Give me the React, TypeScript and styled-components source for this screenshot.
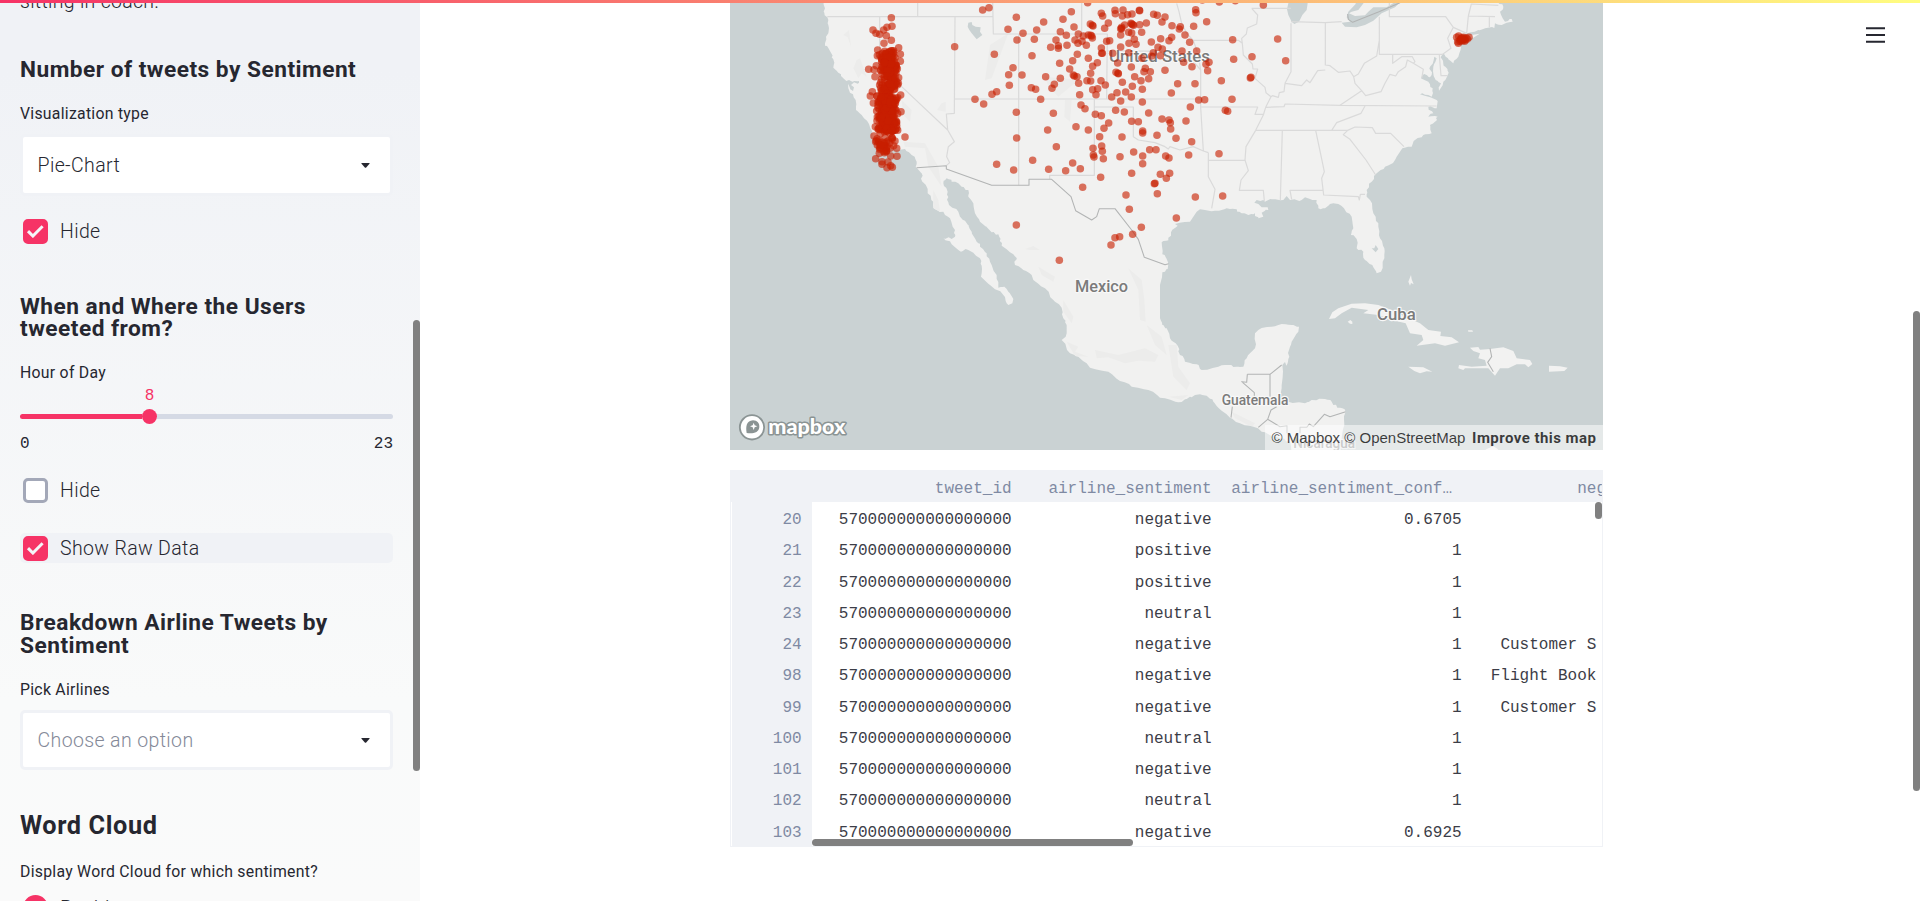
import React from "react";
import styled, { createGlobalStyle } from "styled-components";

const GlobalStyle = createGlobalStyle`
  html, body { margin: 0; padding: 0; overflow: hidden; background: #fff; }
  *, *::before, *::after { box-sizing: border-box; }
`;

const SANS = `Roboto, "Liberation Sans", sans-serif`;
const MONO = `"Liberation Mono", monospace`;
const INK = "#262730";
const PINK = "#f63366";

/* ---------- page frame ---------- */

const Page = styled.div`
  position: relative;
  display: flex;
  width: 1920px;
  height: 901px;
  overflow: hidden;
  background: #fff;
  color: ${INK};
  font-family: ${SANS};
`;

const Decoration = styled.div`
  position: absolute;
  inset: 0 0 auto 0;
  height: 3px;
  z-index: 5;
  background: linear-gradient(90deg, #f63366, #fffd80);
`;

const Thumb = styled.div<{ $top: number; $length: number }>`
  position: absolute;
  right: 0;
  top: ${(p) => p.$top}px;
  width: 7px;
  height: ${(p) => p.$length}px;
  border-radius: 4px;
  background: #808080;
`;

const MenuButton = styled.button`
  position: absolute;
  top: 27px;
  right: 35px;
  width: 19px;
  height: 17px;
  padding: 0;
  border: 0;
  background: none;
  svg { display: block; }
`;

/* ---------- sidebar ---------- */

const Sidebar = styled.aside`
  position: relative;
  flex: none;
  width: 420px;
  height: 901px;
  overflow: hidden;
  background: linear-gradient(180deg, #f0f2f6 0, #f0f2f6 70px, #f9fafa 700px, #fafafa 901px);
`;

const SidebarContent = styled.div`
  display: flex;
  flex-direction: column;
  margin-top: -12px;
  padding: 0 27px 0 20px;
`;

const Paragraph = styled.p`
  margin: 0;
  font-size: 19.5px;
  font-weight: 350;
  line-height: 27px;
  height: 28px;
  letter-spacing: 0.3px;
  white-space: nowrap;
`;

const Heading = styled.h3<{ $gap: number }>`
  margin: ${(p) => p.$gap - 1}px 0 0;
  padding-bottom: 1px;
  font-size: 22.7px;
  font-weight: 700;
  line-height: 22.4px;
  letter-spacing: 0.48px;
  white-space: nowrap;
`;

const Title = styled.h2`
  margin: 43px 0 0;
  font-size: 25.3px;
  font-weight: 700;
  line-height: 25px;
  letter-spacing: 0.6px;
`;

const Label = styled.label<{ $gap?: number }>`
  margin-top: ${(p) => p.$gap ?? 20}px;
  font-size: 15.8px;
  font-weight: 370;
  line-height: 24px;
  letter-spacing: 0.27px;
  white-space: nowrap;
`;

const Select = styled.div<{ $height: number; $muted?: boolean }>`
  display: flex;
  align-items: center;
  justify-content: space-between;
  height: ${(p) => p.$height}px;
  margin-top: 8px;
  padding: 0 20.5px 0 14.5px;
  border: 3px solid #f0f2f6;
  border-radius: 5px;
  background: #fff;
  color: ${(p) => (p.$muted ? "#848998" : INK)};
  font-size: 19.5px;
  font-weight: 350;
  letter-spacing: 0.38px;
`;

const CheckRow = styled.div<{ $gap: number; $active?: boolean }>`
  display: flex;
  align-items: center;
  height: 30px;
  margin-top: ${(p) => p.$gap}px;
  padding-left: 3px;
  gap: 12px;
  border-radius: 5px;
  background: ${(p) => (p.$active ? "#f0f2f6" : "transparent")};
  font-size: 19.5px;
  font-weight: 350;
  letter-spacing: 0.35px;
`;

const RadioLabel = styled.span`
  padding-top: 3px;
`;

const Box = styled.span<{ $checked?: boolean }>`
  display: flex;
  align-items: center;
  justify-content: center;
  width: 25px;
  height: 25px;
  border: 3px solid ${(p) => (p.$checked ? PINK : "#a3a8b8")};
  border-radius: 5px;
  background: ${(p) => (p.$checked ? PINK : "#fff")};
`;

const Radio = styled.span`
  width: 25px;
  height: 25px;
  border: 8px solid ${PINK};
  border-radius: 50%;
  background: #fff;
`;

const Slider = styled.div`
  display: flex;
  flex-direction: column;
  padding-top: 3px;
  font-family: ${MONO};
  font-size: 16px;
`;

const SliderValue = styled.div`
  padding-left: 124.7px;
  color: ${PINK};
  line-height: 16px;
`;

const Track = styled.div`
  display: flex;
  align-items: center;
  height: 15px;
  margin-top: 5px;
`;

const TrackPart = styled.div<{ $filled?: boolean }>`
  width: ${(p) => (p.$filled ? "122px" : "auto")};
  flex: ${(p) => (p.$filled ? "none" : "1")};
  height: 5px;
  border-radius: ${(p) => (p.$filled ? "3px 0 0 3px" : "0 3px 3px 0")};
  background: ${(p) => (p.$filled ? PINK : "#d5dae5")};
`;

const Knob = styled.div`
  flex: none;
  width: 15px;
  height: 15px;
  border-radius: 50%;
  background: ${PINK};
`;

const Ticks = styled.div`
  display: flex;
  justify-content: space-between;
  margin-top: 10px;
  line-height: 20px;
`;

const Caret = () => (
  <svg width="9" height="5" viewBox="0 0 9 5">
    <path d="M.3.4Q0 0 .6 0H8.4Q9 0 8.7.4L5.2 4.4Q4.5 5 3.8 4.4Z" fill={INK} />
  </svg>
);

const CheckMark = styled.svg`
  flex: none;
`;

const Check = () => (
  <CheckMark width="19" height="14" viewBox="0 0 19 14">
    <path d="M2 7.1 6.9 12 16.6 2.2" fill="none" stroke="#f4f5f8" strokeWidth="3" />
  </CheckMark>
);

/* ---------- main column ---------- */

const Main = styled.main`
  position: relative;
  flex: 1;
  display: flex;
  flex-direction: column;
  align-items: center;
  gap: 20px;
  padding-right: 7px;
`;

const MapFrame = styled.div`
  position: relative;
  width: 873px;
  height: 450px;
  overflow: hidden;
  background: #cad2d3;
  svg { display: block; }
`;

const Attribution = styled.div`
  position: absolute;
  right: 0;
  bottom: 0;
  display: flex;
  align-items: center;
  width: 338px;
  height: 25px;
  padding-left: 6.5px;
  background: rgba(255, 255, 255, 0.5);
  color: rgba(0, 0, 0, 0.75);
  font-family: "Liberation Sans", sans-serif;
  font-size: 15px;
  white-space: nowrap;
  span { margin-right: 4.2px; }
  strong { margin-left: 2.5px; font-family: ${SANS}; font-weight: 700; letter-spacing: 0.45px; }
`;

const TableFrame = styled.div`
  position: relative;
  width: 873px;
  height: 377px;
  overflow: hidden;
  border: 1px solid #f0f2f6;
  font-family: ${MONO};
  font-size: 16px;
`;

const TableRow = styled.div<{ $head?: boolean }>`
  display: flex;
  width: 1000px;
  height: ${(p) => (p.$head ? 31 : 31.25)}px;
  background: ${(p) => (p.$head ? "#f0f2f6" : "transparent")};
`;

const TableBody = styled.div`
  width: 866px;
  height: 344px;
  overflow: hidden;
  background: linear-gradient(90deg, #fff 1px, #f0f2f6 1px 81px, #fff 81px);
`;

const Cell = styled.div<{ $width: number; $muted?: boolean; $head?: boolean }>`
  flex: none;
  width: ${(p) => p.$width}px;
  padding: 0 10.4px;
  overflow: hidden;
  text-overflow: ellipsis;
  white-space: nowrap;
  text-align: right;
  line-height: ${(p) => (p.$head ? 36 : 36.4)}px;
  height: 31px;
  color: ${(p) => (p.$muted ? "#7f8aa3" : "#3c3d47")};
`;

const HeadEllipsis = styled(Cell)`
  padding-left: 9.2px;
  text-align: left;
`;

const HThumb = styled.div`
  position: absolute;
  left: 81px;
  bottom: 0;
  width: 321px;
  height: 7px;
  border-radius: 4px;
  background: #808080;
`;

/* ---------- map data: three units per pixel, x starts at 15 ---------- */

type P = [number, number];
const parse = (s: string, dx = 0, dy = 0): P[] =>
  s.trim().split(/\s+/).map((t) => {
    const [x, y] = t.split(",").map(Number);
    return [x + dx, y + dy] as P;
  });
const line = (pts: P[]) => "M" + pts.map((p) => p.join(" ")).join("L");

let seed = 7;
const rand = () => {
  seed = (seed * 16807) % 2147483647;
  return seed / 2147483647;
};

/* adds small coastal irregularity to long straight runs */
const rough = (pts: P[]): P[] => {
  const out: P[] = [];
  pts.forEach((p, i) => {
    out.push(p);
    const n = pts[i + 1];
    if (!n) return;
    const len = Math.hypot(n[0] - p[0], n[1] - p[1]);
    if (len > 16 && len < 90) {
      for (const t of [0.35, 0.7]) {
        out.push([
          Math.round(p[0] + (n[0] - p[0]) * t + (rand() - 0.5) * 7),
          Math.round(p[1] + (n[1] - p[1]) * t + (rand() - 0.5) * 7),
        ]);
      }
    }
  });
  return out;
};

const E = 1320;
const S = 675;

const mainland: P[] = [
  ...rough([
    ...parse(`295,0 296,14 300,25 299,46 307,52 310,75 310,100 303,110 300,137 312,148 318,158 325,178 325,203 340,218
      355,235 364,243 372,240 382,245 402,243 402,248 385,249 378,255 387,262 384,273 376,268 369,252 370,265 375,278 392,300 393,330 410,345 432,372 436,385 442,410 455,440
      480,452 500,446 540,447 560,465 575,485 575,503 590,520 592,545 605,560 608,580 625,605 630,628 655,635 675,655 690,690`),
    ...parse(`690,35 680,42 655,38 680,58 708,80 722,72 730,75 765,100 770,122 768,155 795,180 835,210 845,235 850,240
      862,235 865,222 850,200 838,185 820,188 815,150 795,110 785,85 765,65 755,50 740,20 732,2`, 0, S),
    ...parse(`720,662 705,650 700,635 672,615 668,595 668,575 655,550 665,535 680,545 700,550 710,560 730,570 730,590
      745,610 750,640 765,665 785,680`),
    ...parse(`780,0 800,22 820,28 825,45 830,62 865,88 875,103 868,110 870,120 895,135 920,150 925,165 960,190 985,225
      1010,248 1015,280 1025,300 1022,335 1010,345 1035,385 1060,395 1095,428 1150,440 1185,468 1220,485 1270,495
      1305,518`, 0, S),
    ...parse(`0,520 40,532 65,522 90,510 125,512 145,530 160,548 195,578 225,595 265,605 300,622 345,640 375,650
      380,690`, E, S),
  ]),
  ...rough([
    ...parse(`525,690 530,640 538,600 542,560 525,548 505,540 500,530 480,522 440,525 420,535 370,530 338,533 345,515
      350,480 352,420 360,404 364,422 370,402 372,375 380,350 400,320 402,305 380,300 350,297 320,305 280,315 270,325 270,370 262,378
      245,400 235,425 215,425 195,420 160,425 110,435 95,418 60,410 45,390 38,362 15,340 5,310 -8,300 -15,280
      -15,180 -8,142 8,132 10,118 4,100 -8,88 -10,52 10,46 18,22 38,2`, E, S),
    ...parse(`30,672 75,665 95,635 105,628 150,632 185,625 215,628 230,640 250,645 270,640 280,655 295,650 290,638
      310,630 308,622 290,622 280,612 268,608 275,600 300,605 320,598 355,600 365,588 375,600 410,600 420,592 455,600 460,625
      480,625 505,610 520,612 540,630 560,650 565,685`, E),
    ...parse(`558,30 575,42 575,70 595,80 600,105 622,120 635,145 648,140 658,100 658,70 645,40 640,5`, E, S),
    ...parse(`640,670 625,640 615,600 605,590 605,570 620,545 635,520 660,500 690,480 712,445 740,440 750,420
      775,405 800,400 795,375 810,365 818,350 790,350 805,340 790,320 815,325 815,300 765,283 790,285 800,290 803,265 790,245
      768,235 778,222 795,232 800,225 795,200 808,170 815,175 805,200 812,240 828,250 822,272 835,245 848,225 848,208 835,192 829,168 836,160 850,178 865,190 880,170 888,140
      870,130 880,110 905,100 940,90 960,85 988,84 990,70 1010,75 1043,65 1040,57 1020,65 1005,35 1015,20 1000,8 1000,0`, E),
  ]),
];

const islands = [
  `492,282 502,262 520,250 560,236 600,235 640,240 680,255 720,275 765,295 790,315 828,320 826,333 860,337 882,352
   840,362 810,355 755,362 775,345 770,330 735,325 722,295 680,285 640,270 595,265 610,255 560,248 530,265 510,280`,
  `548,290 556,285 562,290 562,297 555,296`,
  `730,425 775,427 802,440 785,439 765,445 748,438`,
  `915,368 940,366 945,374 975,372 1015,367 1045,378 1055,400 1095,405 1102,417 1090,427 1080,418 1055,418 1030,430 1005,430 990,452 970,430
   900,430 895,435 880,430 882,420 920,425 965,422 960,405 940,400 945,385 925,378`,
  `1152,422 1185,424 1208,428 1198,438 1152,440`,
  `738,150 740,163 746,178 738,174 735,182 730,170`,
  `909,316 922,316 924,320 910,320`,
  `940,690 965,672 985,664 998,672 1010,690`,
].map((s) => parse(s, E, S));

/* eastern end of Long Island */
islands.push(parse("900,108 925,104 944,101 925,113 905,116", E));

const lakes = [
  parse(`730,68 740,66 742,75 752,80 767,82 765,95 772,105 755,118 740,100 733,90 728,80`),
  parse(`372,0 366,28 370,45 380,65 388,72 402,65 412,45 425,30 428,10 424,0`, E),
  parse(`572,0 572,12 550,35 545,52 555,65 530,68 540,80 575,82 600,75 625,62 650,40 690,22 712,0 700,0 665,22 625,22 610,35 600,46 570,48 552,40 560,35 580,30 600,4 600,0`, E),
  parse(`620,70 628,70 632,60 640,72 632,82`, E, S),
];

const states = [
  ...[
    "307,50 803,50", "578,0 578,50", "464,50 464,195 530,260 668,390",
    "690,50 688,340 664,342 668,390 688,425 670,440 665,470 674,488 664,497",
    "803,0 805,102 1147,102 1145,297", "881,102 881,556", "1070,0 1070,102", "690,297 1427,297",
    "1108,297 1108,526 974,526 974,538", "1108,321 1225,321 1225,410 1240,420 1290,428 1320,440",
    "1147,152 1365,155 1410,190 1427,210",
  ].map((s) => parse(s)),
  ...[
    "0,440 10,447 15,440 45,450 85,440 115,453 130,458", "107,210 107,321 115,453", "85,121 220,121 232,130",
    "260,25 378,25", "260,25 278,45 275,72 247,84 244,102 230,115 232,130 235,165 250,180 262,192 264,207 278,207 270,235 300,262 303,278 318,290 302,322 295,345 272,391 243,440 240,480 250,512 228,540 223,571 295,571 298,603",
    "107,321 278,321 270,343 295,343", "130,458 130,530 150,568 140,625", "130,481 240,481",
    "318,290 322,287 340,292 343,278 357,275 360,250 410,257 425,240 435,248 458,212 481,210", "378,70 378,215 360,250",
    "378,65 480,68 530,65", "481,68 481,195 495,197 520,217 555,213 566,230 580,222 598,190 635,168 643,120",
    "643,50 643,163 833,163", "566,230 570,250 590,272 602,287 648,275 660,250 675,223 692,228 700,215 722,200 727,180 745,190",
    "683,165 683,190 710,170 742,170 750,185 745,190 775,208 770,235", "590,272 525,316", "302,322 357,320 360,312 525,316 815,318",
    "600,318 588,340 515,368 500,391", "272,391 548,391 535,404 555,418 603,480 632,525",
    "548,391 570,381 622,383 632,400 677,400 717,440", "352,391 346,600", "452,391 478,515 470,535 476,585 580,590 583,600 586,583 600,583",
    "380,598 375,571 476,571", "673,0 673,50 842,50 865,82 905,100", "865,82 848,115 858,145 833,163",
    "905,100 910,48 990,50", "910,48 919,12 1000,16", "973,50 973,82", "823,165 828,227 848,227", "35,10 42,35 50,70 65,100 85,121 100,165 107,210",
  ].map((s) => parse(s, E)),
];

const nations = [
  parse("575,503 664,497 664,507 800,556 912,556 912,538 980,538 1038,590 1052,632 1100,660 1115,650 1123,626 1170,626 1220,690 1240,718 1258,772 1320,794 1331,791"),
  ...[
    "247,448 315,448 350,420", "315,448 315,515", "247,448 245,472 230,470 268,503 268,515", "202,545 198,578",
    "280,607 308,583 318,555 335,545", "308,583 345,605 366,602 366,625", "405,625 405,607 425,607 433,597 445,605 478,568 495,575 542,560",
    "975,370 980,395 968,412 985,440",
  ].map((s) => parse(s, E, S)),
  parse("548,42 550,58 563,67 640,36 705,8", E),
];

const relief = [
  "355,105 372,90 378,140 368,112", "395,180 405,175 425,230 410,220 400,235 385,205", "530,300 560,330 555,365 535,345",
  "535,425 600,430 640,500 650,560 610,500 600,445 540,440", "795,135 850,100 800,235 780,240", "625,570 640,600 645,635 625,625",
  "960,230 1060,240 1000,290 970,260", "1020,300 1040,300 1035,365 1018,350", "650,310 662,305 662,335 636,330",
  "1210,805 1250,840 1258,900 1262,965 1245,960 1240,870", "1265,975 1310,1010 1325,1065 1290,1035",
  "1110,1050 1180,1065 1260,1045 1300,1065 1290,1085 1240,1082 1200,1090 1150,1072 1115,1075", "1015,900 1045,950 1040,970 1015,935",
  "1025,1025 1060,1040 1050,1055 1090,1070 1050,1068", "900,747 925,738 945,750 915,750", "940,800 990,830 985,845 950,825",
  "1330,1035 1355,1035 1360,1100 1395,1150 1385,1170 1345,1130", "1330,1190 1390,1185 1370,1200", "1520,1235 1590,1270 1580,1280 1530,1255",
  "2325,1065 2355,1070 2360,1085 2330,1090",
].map((s) => parse(s));

const dots: P[] = [
  ...parse(`773,30 792,23 874,52 849,88 876,120 894,100 928,118 935,90 956,66 1014,58 1039,35 1088,8 808,163 864,203 851,224 891,225
    853,256 815,275 801,283 750,298 776,312 689,140 921,167 962,230 1006,235 988,253 981,265 919,263 932,268 947,298 874,337 985,340
    968,390 875,414 994,440 923,481 815,493 866,510 971,508 1022,512 1043,489 1066,506 1073,562 1053,380 1090,390 1004,190 1043,182
    1057,163 1090,175 1034,207 1045,225 1048,228 1056,230 1061,250 1086,242 1097,243 1097,220 1103,199 1117,188 1128,242 1141,255 1118,266 1103,269
    1113,284 1064,284 1068,315 1080,326 1111,343 1129,347 1151,369 1137,385 1124,410 1104,445 1130,438 1132,454 1105,465 1107,471 1135,476
    1127,532 1203,585 1213,628 874,675 1249,682 1006,95 1024,106 993,120 1000,137 1000,145 977,142 1026,136 1047,81 1060,102 1075,108 1090,105 1100,108 1102,114 1097,106
    1050,120 1059,130 1071,124 1084,136 1096,72 1104,78 1102,76 1129,40 1133,48 1139,85 1150,69 1170,31 1171,41 1194,30 1192,48
    1208,44 1221,42 1243,31 1244,32 1286,43 1297,46 1311,66 1320,51 1190,82 1187,86 1190,86 1187,105 1199,75 1218,70 1223,74 1220,72 1226,76 1244,74 1264,69
    1211,97 1220,99 1250,97 1187,141 1212,130 1228,118 1233,133 1279,126 1307,116 1145,124 1154,122 1129,144 1130,160 1132,160 1163,160 1211,158
    1178,189 1173,217 1179,220 1180,221 1219,201 1229,230 1248,242 1257,215 1261,205 1276,215 1271,236 1192,247 1222,259 1252,268 1202,276
    1176,278 1160,291 1187,303 1219,291 1252,306 1172,331 1198,336 1271,339 1311,357 1220,364 1240,365 1253,393 1253,399 1296,406 1191,411
    1226,456 1274,449 1293,449 1253,468 1253,491 1185,470 1220,520 1306,523 1288,551 1290,550 1297,581 1299,142 1312,147 1306,167 1285,158 1280,168 1251,175`),
  ...parse(`1158,735 1170,713 1184,710 1223,703 1003,781`),
  ...parse(`92,29 93,38 125,65 86,79 46,80 43,87 21,77 60,105 74,127 95,153 51,153 20,112 12,122 56,187 81,200 123,193 132,187 128,212
    38,251 90,251 19,279 0,211 101,300 119,299 76,321 63,363 12,360 16,368 17,387 33,415 80,425 71,465 2,468 12,474 14,520 4,535 91,591 173,588
    34,654 162,461 181,331 188,334 201,298 169,242 206,178 203,119 256,234 258,232 261,170 338,117 362,182 295,15 163,6 211,2 112,0`, E),
  ...parse(`499,53 444,90 453,100 464,103 476,90 486,82 501,79 484,107 499,121 477,130 521,143 526,163 526,184 458,150 431,208 447,209
    450,230 442,275 436,288 445,309 527,285 528,335 540,411 447,408 452,425 451,380 452,476 471,485 471,493 486,503 502,502 497,497 516,469
    497,468 463,460 515,445 489,486 478,458 484,452 506,437 465,433 457,435 518,391`),
  ...parse(`875,112 881,108 912,112 880,130 878,125 886,118 889,116 893,118 896,119 898,116 901,120 892,122 888,121 903,114 907,117 895,112 885,124 899,124 890,113`, E),
];

/* dense west-coast column */
for (let i = 0; i < 430; i++) {
  const g = rand() + rand() - 1;
  const y = i < 270 ? 152 + rand() * 243 : i < 400 ? 290 + rand() * 105 : 395 + rand() * 62;
  dots.push([Math.round((y < 200 ? 484 : y < 270 ? 493 : 486) + g * 35), Math.round(y)]);
}

const poly = (p: P[]) => line(p) + "Z";

const MapLabel = styled.text`
  font-family: ${SANS};
  font-weight: 500;
  fill: #7b7b7b;
  stroke: #f8f8f8;
  stroke-width: 7px;
  stroke-linejoin: round;
  paint-order: stroke;
`;

const LogoText = styled.text`
  font-family: Lato, ${SANS};
  font-weight: 900;
  fill: #fff;
  stroke: #8b9494;
  stroke-width: 9px;
  stroke-linejoin: round;
  paint-order: stroke;
`;

const TweetMap = () => (
  <MapFrame>
    <svg width="873" height="450" viewBox="15 0 2619 1350">
      <defs>
        <clipPath id="land"><path d={poly(mainland)} /></clipPath>
      </defs>
      <path d={poly(mainland)} fill="#f1f1f0" />
      <g clipPath="url(#land)">
        <path d={relief.map(poly).join("")} fill="#ececeb" />
      </g>
      <path d={islands.map(poly).join("")} fill="#f2f2f1" />
      <path d={lakes.map(poly).join("")} fill="#cad2d3" />
      <path d={states.map(line).join("")} fill="none" stroke="#dadada" strokeWidth="3.6" strokeLinejoin="round" />
      <path d={nations.map(line).join("")} fill="none" stroke="#b2b4b4" strokeWidth="3.2" strokeLinejoin="round" />
      <MapLabel x="1152" y="186" fontSize="51" textLength="303" lengthAdjust="spacingAndGlyphs">United States</MapLabel>
      <MapLabel x="1050" y="877" fontSize="51" textLength="159" lengthAdjust="spacingAndGlyphs">Mexico</MapLabel>
      <MapLabel x="1956" y="960" fontSize="51" textLength="116" lengthAdjust="spacingAndGlyphs">Cuba</MapLabel>
      <MapLabel x="1490" y="1215" fontSize="42" textLength="200" lengthAdjust="spacingAndGlyphs">Guatemala</MapLabel>
      <MapLabel x="1705" y="1343" fontSize="42" textLength="185" lengthAdjust="spacingAndGlyphs" opacity="0.7">Nicaragua</MapLabel>
      <g fill="#c81e00" fillOpacity="0.62">
        {dots.map(([x, y], i) => <circle key={i} cx={x} cy={y} r="11.3" />)}
      </g>
      <circle cx="81" cy="1282" r="36.5" fill="#fff" stroke="#8b9494" strokeWidth="5.5" />
      <path d="M65 1299C62 1280 64 1262 84 1261C97 1261 104 1270 103 1281C102 1299 82 1302 65 1299Z" fill="#8b9494" />
      <path d="M86 1268 89 1276 97 1279 89 1282 86 1290 83 1282 75 1279 83 1276Z" fill="#fff" />
      <LogoText x="130" y="1301" fontSize="62" textLength="231" lengthAdjust="spacingAndGlyphs">mapbox</LogoText>
    </svg>
    <Attribution>
      <span>© Mapbox</span>
      <span>© OpenStreetMap</span>
      <strong>Improve this map</strong>
    </Attribution>
  </MapFrame>
);

/* ---------- table ---------- */

const rows: [string, string, string, string][] = [
  ["20", "negative", "0.6705", ""],
  ["21", "positive", "1", ""],
  ["22", "positive", "1", ""],
  ["23", "neutral", "1", ""],
  ["24", "negative", "1", "Customer Service Issue"],
  ["98", "negative", "1", "Flight Booking Problems"],
  ["99", "negative", "1", "Customer Service Issue"],
  ["100", "neutral", "1", ""],
  ["101", "negative", "1", ""],
  ["102", "neutral", "1", ""],
  ["103", "negative", "0.6925", ""],
];

const DataTable = () => (
  <TableFrame>
    <TableRow $head>
      <Cell $width={81} $head $muted />
      <Cell $width={210} $head $muted>tweet_id</Cell>
      <Cell $width={200} $head $muted>airline_sentiment</Cell>
      <HeadEllipsis $width={250} $head $muted>airline_sentiment_confidence</HeadEllipsis>
      <Cell $width={250} $head $muted>negativereason</Cell>
    </TableRow>
    <TableBody>
      {rows.map(([id, sentiment, confidence, reason]) => (
        <TableRow key={id}>
          <Cell $width={81} $muted>{id}</Cell>
          <Cell $width={210}>570000000000000000</Cell>
          <Cell $width={200}>{sentiment}</Cell>
          <Cell $width={250}>{confidence}</Cell>
          <Cell $width={250}>{reason}</Cell>
        </TableRow>
      ))}
    </TableBody>
    <HThumb />
    <Thumb $top={31} $length={17} />
  </TableFrame>
);

export default function App() {
  return (
    <Page>
      <GlobalStyle />
      <Decoration />
      <Sidebar>
        <SidebarContent>
          <Paragraph>sitting in coach.</Paragraph>
          <Heading $gap={44}>Number of tweets by Sentiment</Heading>
          <Label>Visualization type</Label>
          <Select $height={62}>Pie-Chart<Caret /></Select>
          <CheckRow $gap={20}><Box $checked><Check /></Box>Hide</CheckRow>
          <Heading $gap={50.4}>When and Where the Users<br />tweeted from?</Heading>
          <Label $gap={19.6}>Hour of Day</Label>
          <Slider>
            <SliderValue>8</SliderValue>
            <Track><TrackPart $filled /><Knob /><TrackPart /></Track>
            <Ticks><span>0</span><span>23</span></Ticks>
          </Slider>
          <CheckRow $gap={21}><Box />Hide</CheckRow>
          <CheckRow $gap={28} $active><Box $checked><Check /></Box>Show Raw Data</CheckRow>
          <Heading $gap={50}>Breakdown Airline Tweets by<br />Sentiment</Heading>
          <Label>Pick Airlines</Label>
          <Select $height={60} $muted>Choose an option<Caret /></Select>
          <Title>Word Cloud</Title>
          <Label $gap={22}>Display Word Cloud for which sentiment?</Label>
          <CheckRow $gap={8}><Radio /><RadioLabel>Positive</RadioLabel></CheckRow>
        </SidebarContent>
        <Thumb $top={320} $length={451} />
      </Sidebar>
      <Main>
        <TweetMap />
        <DataTable />
        <MenuButton aria-label="Menu">
          <svg width="19" height="17" viewBox="0 0 19 17">
            <path d="M0 1.3H19M0 8H19M0 14.7H19" stroke={INK} strokeWidth="2" />
          </svg>
        </MenuButton>
        <Thumb $top={311} $length={480} />
      </Main>
    </Page>
  );
}
